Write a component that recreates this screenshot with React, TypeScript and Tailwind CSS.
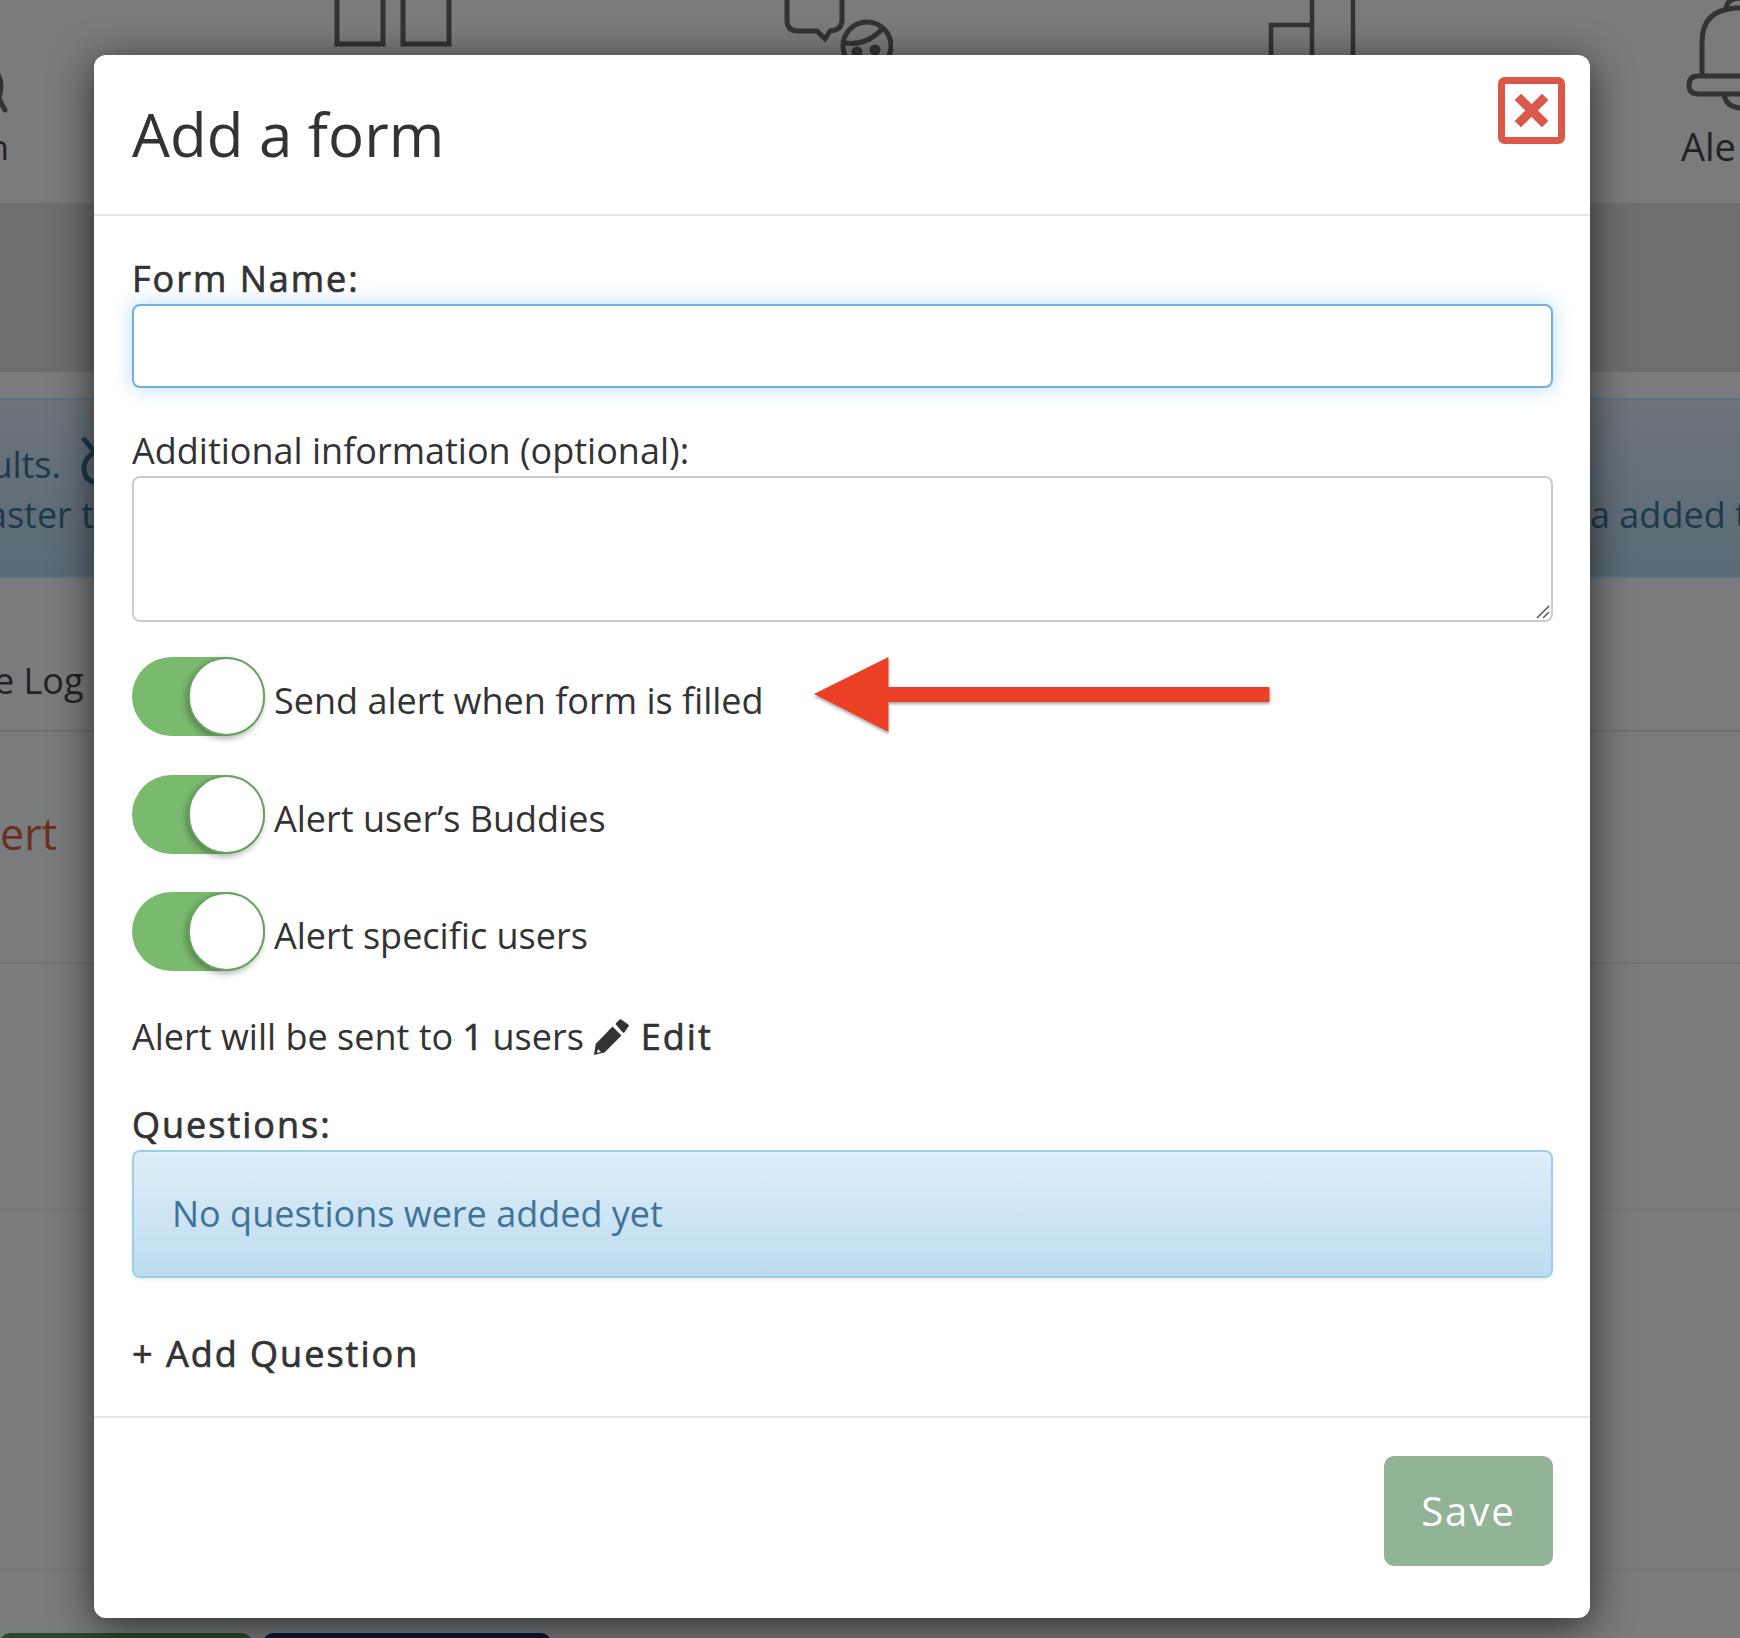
import React from 'react'

const font = { fontFamily: '"Open Sans", "Noto Sans", sans-serif' }

const Toggle: React.FC<{ label: string }> = ({ label }) => (
  <div className="flex items-center h-[79px]">
    <div className="relative w-[133px] h-[79px] rounded-full bg-[#7aba6f] shrink-0">
      <div className="absolute right-0 top-0 w-[77px] h-[79px] rounded-full bg-white border-2 border-[#66a35e] shadow-[-2px_3px_6px_rgba(0,0,0,0.3)]" />
    </div>
    <span className="ml-[9px] mt-[9px] text-[36px] leading-[50px] text-[#333333]">
      {label}
    </span>
  </div>
)

const GridIcon = () => (
  <svg width="118" height="50" viewBox="0 0 118 50" fill="none" stroke="#333" strokeWidth="5" className="shrink-0">
    <path d="M3 -10V44H49V-10M69 -10V44H115V-10" />
  </svg>
)

const ChatIcon = () => (
  <svg width="110" height="70" viewBox="0 0 110 70" fill="none" stroke="#333" strokeWidth="5" strokeLinejoin="round" className="shrink-0">
    <path d="M4 -8V20Q4 31 15 31H34L42 39L47 31Q59 30 59 20V-8" />
    <circle cx="84" cy="46" r="24" />
    <path d="M62 43Q84 46 100 28" />
    <circle cx="74" cy="52" r="3" />
    <circle cx="92" cy="50" r="3" />
  </svg>
)

const ChartIcon = () => (
  <svg width="90" height="60" viewBox="0 0 90 60" fill="none" stroke="#333" strokeWidth="4.5" className="shrink-0">
    <path d="M3 60V25H44V60M44 -5V60M85 -5V60" />
  </svg>
)

const BellIcon = () => (
  <svg width="60" height="120" viewBox="0 0 60 120" fill="none" stroke="#333" strokeWidth="5" className="shrink-0">
    <path d="M16 74V42Q16 10 50 8H70" />
    <path d="M70 76H12Q3 76 3 85Q3 94 12 94H70" />
    <path d="M38 94Q40 108 56 108H70" />
    <path d="M40 8Q42 -2 54 -2" />
  </svg>
)

const CloseIcon = () => (
  <svg width="67" height="67" viewBox="0 0 67 67">
    <rect x="3.5" y="3.5" width="60" height="60" rx="3" fill="#fff" stroke="#d9584a" strokeWidth="7" />
    <path d="M23 23L44 44M44 23L23 44" stroke="#d9584a" strokeWidth="9" strokeLinecap="square" />
  </svg>
)

const PencilIcon = () => (
  <svg width="36" height="36" viewBox="0 0 36 36" fill="#333333" className="ml-[9px] shrink-0">
    <path
      fillRule="evenodd"
      d="M2.7 25L19.5 7.5L28.5 16.5L11.5 33.5L1 36ZM5 30L8 33L4 34Z"
    />
    <path
      d="M24 5L27.5 1.5L34.5 6.5L30.5 12.5Z"
      stroke="#333333"
      strokeWidth="2.5"
      strokeLinejoin="round"
    />
  </svg>
)

const Arrow = () => (
  <svg width="456" height="90" viewBox="0 0 456 90" className="absolute left-[814px] top-[649px] overflow-visible">
    <defs>
      <filter id="arrowShadow" x="-5%" y="-20%" width="110%" height="150%">
        <feDropShadow dx="0" dy="2" stdDeviation="1.5" floodColor="#000" floodOpacity="0.35" />
      </filter>
    </defs>
    <path
      d="M0 45L74.5 8V38H455.5V53H74.5V83Z"
      fill="#ec4126"
      filter="url(#arrowShadow)"
    />
  </svg>
)

export default function App() {
  return (
    <div
      className="relative w-[1740px] h-[1638px] overflow-hidden bg-[#7a7b7d] text-[#333333]"
      style={font}
    >
      {/* page behind the dialog */}
      <div className="h-[203px] relative overflow-hidden">
        <div className="flex items-start pl-[334px]">
          <GridIcon />
          <div className="ml-[331px] shrink-0">
            <ChatIcon />
          </div>
          <div className="ml-[375px] shrink-0">
            <ChartIcon />
          </div>
          <div className="ml-[328px] shrink-0">
            <BellIcon />
          </div>
        </div>
        <svg width="12" height="70" viewBox="0 0 12 70" fill="none" stroke="#333" strokeWidth="5" strokeLinecap="round" className="absolute left-0 top-[50px]">
          <path d="M-2 24Q4 36 -2 50" />
          <path d="M-1 49L5 60" />
        </svg>
        <span className="absolute left-[-12px] top-[123px] text-[34px] leading-[48px] text-[#222]">n</span>
        <span className="absolute left-[1681px] top-[122px] text-[38px] leading-[48px] text-[#222] whitespace-nowrap">
          Ale
        </span>
      </div>
      <div className="h-[169px] bg-[#6e6e6e]" />
      <div className="relative mt-[26px] h-[180px] border-y-2 border-[#587484] bg-gradient-to-b from-[#6d747c] to-[#5a6a75] text-[#1d3a4d] text-[36px] leading-[50px] whitespace-nowrap flex justify-between">
        <div className="w-[94px] overflow-hidden pt-[40px] flex flex-col items-end">
          <span className="pr-[33px]">ults.</span>
          <span>aster t</span>
        </div>
        <svg width="20" height="56" viewBox="0 0 20 56" fill="none" stroke="#1d3a4d" strokeWidth="5" className="absolute left-[80px] top-[34px]">
          <path d="M3 4L18 22" />
          <path d="M14 18Q3 26 4 36Q5 46 14 48" />
        </svg>
        <div className="w-[150px] overflow-hidden pt-[90px]">a added t</div>
      </div>
      <div className="h-[154px] border-b-2 border-[#6e6f71] flex items-end pb-[24px] text-[36px] leading-[50px] text-[#222] overflow-hidden">
        <span className="ml-[-6px]">e Log</span>
      </div>
      <div className="h-[232px] border-b-2 border-[#717274] pt-[74px] text-[43px] leading-[56px] font-medium text-[#6a2f20]">
        <span className="ml-[-38px]">Alert</span>
      </div>
      <div className="h-[247px] border-b-2 border-[#747577]" />
      <div className="h-[360px] border-b-2 border-[#747577]" />
      <div className="flex mt-[62px] gap-[11px]">
        <div className="w-[252px] h-[20px] rounded-t-[10px] bg-[#2b4a2c]" />
        <div className="w-[288px] h-[20px] rounded-t-[10px] bg-[#0f1538]" />
      </div>

      {/* dialog */}
      <div className="absolute left-[94px] top-[55px] w-[1496px] h-[1563px] bg-white rounded-[12px] shadow-[0_8px_40px_rgba(0,0,0,0.65)] flex flex-col">
        <div className="h-[161px] border-b-2 border-[#e5e5e5] pl-[38px] pr-[25px] pt-[39px] flex justify-between items-start">
          <h4 className="text-[60px] leading-[80px] font-normal">Add a form</h4>
          <div className="mt-[-17px]">
            <CloseIcon />
          </div>
        </div>

        <div className="flex-1 pl-[38px] pr-[37px] pt-[38px] text-[#333333]">
          <label className="block text-[36px] leading-[50px] tracking-[2px] [-webkit-text-stroke:0.7px_#333333]">Form Name:</label>
          <div className="h-[84px] rounded-[8px] border-2 border-[#73ade6] shadow-[0_0_20px_rgba(102,175,233,0.45)] bg-white" />

          <label className="block mt-[38px] text-[36px] leading-[50px]">Additional information (optional):</label>
          <div className="relative h-[146px] rounded-[8px] border-2 border-[#cccccc] bg-white">
            <svg width="14" height="14" viewBox="0 0 14 14" className="absolute right-[1px] bottom-[1px]" stroke="#555" strokeWidth="1.5">
              <path d="M1 13L13 1M7 13L13 7" />
            </svg>
          </div>

          <div className="mt-[35px] flex flex-col gap-[38.5px]">
            <Toggle label="Send alert when form is filled" />
            <Toggle label="Alert user’s Buddies" />
            <Toggle label="Alert specific users" />
          </div>

          <div className="mt-[41px] flex items-center text-[36px] leading-[50px]">
            <span>
              Alert will be sent to <span className="[-webkit-text-stroke:0.7px_#333333]">1</span> users
            </span>
            <PencilIcon />
            <span className="ml-[12px] tracking-[2px] [-webkit-text-stroke:0.7px_#333333]">Edit</span>
          </div>

          <label className="block mt-[38px] text-[36px] leading-[50px] tracking-[2px] [-webkit-text-stroke:0.7px_#333333]">Questions:</label>
          <div className="h-[128px] rounded-[8px] border-2 border-[#9acfea] bg-gradient-to-b from-[#dfeef7] to-[#bddcf0] shadow-[0_2px_3px_rgba(0,0,0,0.06)] flex items-center pl-[38px] text-[36px] text-[#3f7398]">
            No questions were added yet
          </div>

          <div className="mt-[51px] text-[36px] leading-[50px] tracking-[2px] [-webkit-text-stroke:0.7px_#333333]">+ Add Question</div>
        </div>

        <div className="h-[202px] border-t-2 border-[#e5e5e5] pl-[38px] pr-[37px] pt-[38px] flex justify-end">
          <button className="w-[169px] h-[110px] rounded-[10px] bg-[#91b396] text-white text-[40px] tracking-[2px]">
            Save
          </button>
        </div>
      </div>

      <Arrow />
    </div>
  )
}
